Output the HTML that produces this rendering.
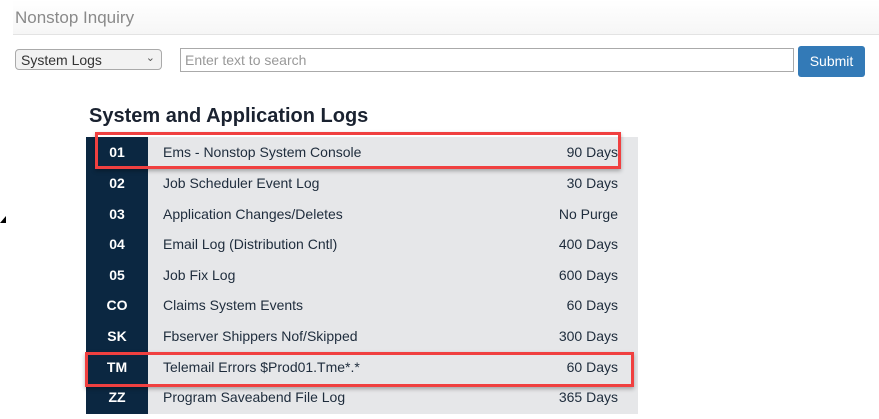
<!DOCTYPE html>
<html><head><meta charset="utf-8"><style>
body{margin:0;width:879px;height:419px;background:#fff;position:relative;overflow:hidden;font-family:"Liberation Sans",sans-serif}
.hdr{position:absolute;left:13px;top:0;width:866px;height:34px;background:linear-gradient(#fff,#f6f6f6);border-bottom:1px solid #e3e3e3}
.hdr span{position:absolute;left:2px;top:8px;font-size:17px;color:#8a8a8a}
.sel{position:absolute;left:15px;top:49px;width:147px;height:21px;border:1px solid #aaa;border-radius:4px;background:#f2f2f2;font-size:14px;color:#333;box-sizing:border-box;padding:2px 5px}
.sel i{position:absolute;right:6px;top:1px;font-style:normal;font-size:11px;color:#555}
.inp{position:absolute;left:180px;top:48px;width:614px;height:24px;border:1px solid #aaa;box-sizing:border-box;font-size:14px;color:#999;padding:3px 4px}
.btn{position:absolute;left:798px;top:46px;width:67px;height:31px;background:#337ab7;border-radius:3px;color:#fff;font-size:14px;text-align:center;line-height:31px}
h1{position:absolute;left:89px;top:105px;margin:0;font-size:20px;font-weight:bold;color:#1a2230}
.tbl{position:absolute;left:86px;top:137px;width:552px;height:277px;background:#e6e7e9}
.col{position:absolute;left:86px;top:137px;width:62px;height:277px;background:#0b2741}
.row{position:absolute;left:86px;width:532px;height:30px;font-size:14px;color:#1e2c3c;line-height:30px}
.row b{position:absolute;left:0;width:62px;text-align:center;color:#fff;font-weight:bold;font-size:14px}
.row .d{position:absolute;left:77px}
.row .r{position:absolute;right:0}
.red{position:absolute;border:3px solid #f04040;box-shadow:0 2px 4px rgba(0,0,0,.3)}
.tri{position:absolute;left:0;top:216px;width:0;height:0;border-left:6px solid transparent;border-bottom:7px solid #000}
</style></head><body>
<div class="hdr"><span>Nonstop Inquiry</span></div>
<div class="sel">System Logs<i>&#8964;</i></div>
<div class="inp">Enter text to search</div>
<div class="btn">Submit</div>
<h1>System and Application Logs</h1>
<div class="tbl"></div><div class="col"></div>
<div class="tri"></div>
<div class="row" style="top:137px"><b>01</b><span class="d">Ems - Nonstop System Console</span><span class="r">90 Days</span></div>
<div class="row" style="top:168px"><b>02</b><span class="d">Job Scheduler Event Log</span><span class="r">30 Days</span></div>
<div class="row" style="top:199px"><b>03</b><span class="d">Application Changes/Deletes</span><span class="r">No Purge</span></div>
<div class="row" style="top:229px"><b>04</b><span class="d">Email Log (Distribution Cntl)</span><span class="r">400 Days</span></div>
<div class="row" style="top:260px"><b>05</b><span class="d">Job Fix Log</span><span class="r">600 Days</span></div>
<div class="row" style="top:290px"><b>CO</b><span class="d">Claims System Events</span><span class="r">60 Days</span></div>
<div class="row" style="top:321px"><b>SK</b><span class="d">Fbserver Shippers Nof/Skipped</span><span class="r">300 Days</span></div>
<div class="row" style="top:352px"><b>TM</b><span class="d">Telemail Errors $Prod01.Tme*.*</span><span class="r">60 Days</span></div>
<div class="row" style="top:382px"><b>ZZ</b><span class="d">Program Saveabend File Log</span><span class="r">365 Days</span></div>
<div class="red" style="left:95px;top:132px;width:520px;height:31px"></div>
<div class="red" style="left:85px;top:352px;width:543px;height:29px"></div>
</body></html>
